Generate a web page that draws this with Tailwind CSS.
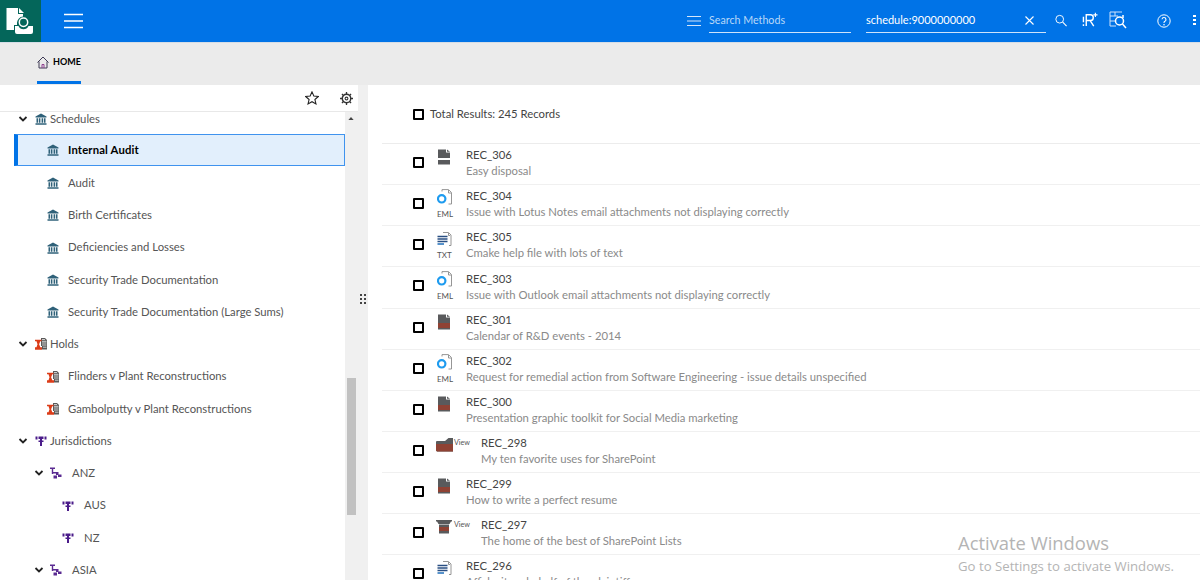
<!DOCTYPE html>
<html><head><meta charset="utf-8"><script src="https://cdn.jsdelivr.net/npm/@tailwindcss/browser@4"></script></head>
<body class="w-[1200px] h-[580px] overflow-hidden bg-white font-['Lato','Noto_Sans',sans-serif] text-[11.3px] relative">
<svg class="hidden"><defs>
<symbol id="bank" viewBox="0 0 12 12"><path d="M6 .5 11.500 3.500V4.500H.5V3.500Z M1.500 5.200H3.200V9.800H1.500Z M4 5.200H5.400V9.800H4Z M6.600 5.200H8V9.800H6.600Z M8.800 5.200H10.500V9.800H8.800Z M.5 10.300H11.500V11.800H.5Z" fill="#2f6179"/></symbol>
<symbol id="hold" viewBox="0 0 12 12"><path d="M6 0H10L12 2V11.500H7V8H6Z" fill="#5a5a5a"/><path d="M7 1.500H10M7 3.300H11.500M7 5H11.500M7 7H11.500M8 9.200H11.500" stroke="#fff" stroke-width=".7"/><path d="M0 1.800H6.500V3.300H5.300L4.100 6.300 5.300 9.300H7V11.800H0V9.300H1.500L2.500 6.300 1.500 3.300H0Z" fill="#dc3c18"/></symbol>
<symbol id="jur" viewBox="0 0 12 12"><path d="M3.500 1.500H8.500V4H7V5.500H8.500V7H7V11H5V7H3.500V5.500H5V4H3.500Z M.5 1.500H2.500V4.500H.5Z M9.500 1.500H11.500V4.500H9.500Z" fill="#4b1c8a"/></symbol>
<symbol id="reg" viewBox="0 0 12 12"><path d="M0 .5H5V2H3.200V7H1.800V2H0Z M3 5H7V6.500H3Z M6 5H8.500V8H6Z M8 7.500H11.500V10H8Z M3.500 8.500H7V11.500H3.500Z" fill="#5a2a91"/></symbol>
<symbol id="chev" viewBox="0 0 10 10"><path d="M1.500 3 5 6.500 8.500 3" fill="none" stroke="#222" stroke-width="1.800"/></symbol>
<symbol id="eml" viewBox="0 0 16 18"><path d="M5 2.500V.6H11.500L14.500 3.500V15H11.500M14 4H11.500V1" fill="none" stroke="#8a8a8a" stroke-width=".9"/><circle cx="4.700" cy="9.800" r="3.700" fill="none" stroke="#1e9bef" stroke-width="2.200"/></symbol>
<symbol id="txt" viewBox="0 0 16 14"><path d="M6 .5H11.500L14 3V13.500H12M13 3.500H11.500V1" fill="none" stroke="#8a8a8a" stroke-width=".9"/><path d="M.5 4.500H10.500M.5 7H10.500M.5 9.500H10.500" stroke="#2a4f83" stroke-width="1.400"/><path d="M.5 12H7" stroke="#0e63b5" stroke-width="1.400"/></symbol>
<symbol id="doc" viewBox="0 0 12 16"><path d="M0 .5H8V3.500H12V15.500H0Z" fill="#595a5c"/><path d="M9 .5 12 2.700H9Z" fill="#595a5c"/><path d="M0 9H12V14H0Z" fill="#8f4234"/></symbol>
<symbol id="dis" viewBox="0 0 12 16"><path d="M0 .5H8V3.500H12V9H0Z" fill="#595a5c"/><path d="M9 .5 12 2.700H9Z" fill="#595a5c"/><path d="M0 11H12V15.500H0Z" fill="#595a5c"/></symbol>
</defs></svg>

<header class="h-[42px] bg-[#0073e7] flex items-center text-white">
  <div class="w-[41px] h-[42px] bg-[#04665a] shrink-0">
    <svg viewBox="0 0 41 42" class="w-[41px] h-[42px]"><path d="M6.500 8H18V14H23V16.500A6.500 6.500 0 0 0 17 22.500V25H14V30H6.500Z" fill="#fff"/><path d="M19 8 24 13H19Z" fill="#fff"/><circle cx="23.500" cy="22.300" r="4.200" fill="none" stroke="#fff" stroke-width="1.500"/><path d="M15 26H18.500A5.500 5.500 0 0 0 28.500 26H33V32Q33 34 31 34H17Q15 34 15 32Z" fill="#fff"/></svg>
  </div>
  <svg class="ml-[23px] w-[20px] h-[16px]" viewBox="0 0 20 16"><path d="M0 1.500H19M0 8H19M0 14.500H19" stroke="#fff" stroke-width="1.400"/></svg>
  <div class="flex-1"></div>
  <svg class="w-[14px] h-[12px] mr-[8px]" viewBox="0 0 14 12"><path d="M0 1.500H14M0 6H14M0 10.500H14" stroke="#d5e6fa" stroke-width="1"/></svg>
  <div class="w-[142px] h-[24px] flex items-center border-b border-[#cfe3fa] text-[#b9d8f8] text-[10.700px] mr-[15px]">Search Methods</div>
  <div class="w-[180px] h-[24px] flex items-center justify-between border-b border-[#cfe3fa] text-[11px]">schedule:9000000000
    <svg class="w-[9px] h-[9px] mr-[12px]" viewBox="0 0 9 9"><path d="M.5.5 8.500 8.500M8.500.5.5 8.500" stroke="#fff" stroke-width="1.100"/></svg></div>
  <svg class="w-[12px] h-[13px] ml-[9px] mb-[2px]" viewBox="0 0 14 14"><circle cx="5.500" cy="5.500" r="4.500" fill="none" stroke="#fff" stroke-width="1.100"/><path d="M9 9 13.500 13.500" stroke="#fff" stroke-width="1.300"/></svg>
  <svg class="w-[16px] h-[15px] ml-[15px] mb-[3px]" viewBox="0 0 16 16"><path d="M1 5V11M1 13V15M4 15V3H8.500A3 3 0 0 1 8.500 9H4M8 9 12 15" fill="none" stroke="#fff" stroke-width="1.500"/><path d="M11.500 3H16M13.750 .8V5.200" stroke="#fff" stroke-width="1.200"/></svg>
  <svg class="w-[18px] h-[18px] ml-[11px] mb-[3px]" viewBox="0 0 18 18"><path d="M13 1H1V15H7M1 5H9M1 10H6M6 1V5" fill="none" stroke="#cfe3fa" stroke-width="1"/><circle cx="10.500" cy="10" r="4" fill="none" stroke="#fff" stroke-width="1.500"/><path d="M13.500 13 17 17M14 4V7" stroke="#fff" stroke-width="1.500"/></svg>
  <svg class="w-[14px] h-[14px] ml-[30px]" viewBox="0 0 14 14"><circle cx="7" cy="7" r="6.200" fill="none" stroke="#fff" stroke-width="1"/><path d="M5 5.300A2 2 0 1 1 7.500 7.500C7 7.800 7 8 7 9" fill="none" stroke="#fff" stroke-width="1.100"/><circle cx="7" cy="10.700" r=".8" fill="#fff"/></svg>
  <div class="ml-[22px] mr-[4px] mb-[2px] flex flex-col gap-[1.500px]"><div class="w-[3px] h-[2.500px] bg-white"></div><div class="w-[3px] h-[2.500px] bg-white"></div><div class="w-[3px] h-[2.500px] bg-white"></div></div>
</header>

<nav class="h-[43px] bg-[#ebebeb] border-t border-[#d5dde6] pl-[37px]">
  <div class="w-[44px] h-[41px] border-b-[3px] border-[#0073e7] flex items-center gap-[4px]">
    <svg class="w-[12px] h-[13px] shrink-0" viewBox="0 0 12 13"><path d="M.5 6.500 6 1 11.500 6.500M2 5.500V12H10V5.500" fill="none" stroke="#3e3a55" stroke-width="1"/><path d="M5 12V8.500H7V12" fill="none" stroke="#8e3f8f" stroke-width="1"/></svg>
    <span class="font-bold text-[9px] text-black">HOME</span>
  </div>
</nav>

<div class="flex h-[495px] bg-[#f0f0f0]">
  <aside class="w-[358px] shrink-0 flex flex-col">
    <div class="h-[27px] bg-white border-b border-[#e8e8e8] flex items-center justify-end pr-[5px] gap-[21px]">
      <svg class="w-[14px] h-[14px]" viewBox="0 0 13 13"><path d="M6.500 .8 8.200 4.700 12.400 5.100 9.200 7.900 10.200 12 6.500 9.900 2.800 12 3.800 7.900 .6 5.100 4.800 4.700Z" fill="none" stroke="#222" stroke-width="1"/></svg>
      <svg class="w-[13px] h-[13px]" viewBox="0 0 12 12"><circle cx="6" cy="6" r="3.900" fill="none" stroke="#333" stroke-width="1.300"/><circle cx="6" cy="6" r="1.300" fill="none" stroke="#333" stroke-width="1"/><path d="M6 0V2M6 10V12M0 6H2M10 6H12M1.800 1.800 3.200 3.200M8.800 8.800 10.200 10.200M10.200 1.800 8.800 3.200M3.200 8.800 1.800 10.200" stroke="#333" stroke-width="1.200"/></svg>
    </div>
    <div class="flex-1 flex overflow-hidden">
      <ul class="w-[345px] bg-white text-[#555] flex flex-col">
        <li class="h-[22px] shrink-0 flex items-start pl-[18px]"><svg class="w-[10px] h-[10px] mr-[7px] mt-[2px]"><use href="#chev"/></svg><svg class="w-[12px] h-[12px] mr-[3px] mt-[1px]"><use href="#bank"/></svg><span class="leading-[13px]">Schedules</span></li>
        <li class="h-[32px] shrink-0 mb-[1px] ml-[14px] bg-[#e2effc] border border-[#3f93ee] border-l-[4px] border-l-[#0073e7] flex items-center pl-[29px] gap-[9px] font-bold text-black tracking-[.15px]"><svg class="w-[12px] h-[12px]"><use href="#bank"/></svg>Internal Audit</li>
        <li class="h-[32px] shrink-0 flex items-center pl-[47px] gap-[9px]"><svg class="w-[12px] h-[12px]"><use href="#bank"/></svg>Audit</li>
        <li class="h-[32px] shrink-0 flex items-center pl-[47px] gap-[9px]"><svg class="w-[12px] h-[12px]"><use href="#bank"/></svg>Birth Certificates</li>
        <li class="h-[33px] shrink-0 flex items-center pl-[47px] gap-[9px]"><svg class="w-[12px] h-[12px]"><use href="#bank"/></svg>Deficiencies and Losses</li>
        <li class="h-[32px] shrink-0 flex items-center pl-[47px] gap-[9px]"><svg class="w-[12px] h-[12px]"><use href="#bank"/></svg>Security Trade Documentation</li>
        <li class="h-[32px] shrink-0 flex items-center pl-[47px] gap-[9px]"><svg class="w-[12px] h-[12px]"><use href="#bank"/></svg>Security Trade Documentation (Large Sums)</li>
        <li class="h-[32px] shrink-0 flex items-center pl-[18px]"><svg class="w-[10px] h-[10px] mr-[7px]"><use href="#chev"/></svg><svg class="w-[12px] h-[12px] mr-[3px]"><use href="#hold"/></svg>Holds</li>
        <li class="h-[33px] shrink-0 flex items-center pl-[47px] gap-[9px]"><svg class="w-[12px] h-[12px]"><use href="#hold"/></svg>Flinders v Plant Reconstructions</li>
        <li class="h-[32px] shrink-0 flex items-center pl-[47px] gap-[9px]"><svg class="w-[12px] h-[12px]"><use href="#hold"/></svg>Gambolputty v Plant Reconstructions</li>
        <li class="h-[32px] shrink-0 flex items-center pl-[18px]"><svg class="w-[10px] h-[10px] mr-[7px]"><use href="#chev"/></svg><svg class="w-[12px] h-[12px] mr-[3px]"><use href="#jur"/></svg>Jurisdictions</li>
        <li class="h-[32px] shrink-0 flex items-center pl-[34px]"><svg class="w-[10px] h-[10px] mr-[6px]"><use href="#chev"/></svg><svg class="w-[12px] h-[12px] mr-[10px]"><use href="#reg"/></svg>ANZ</li>
        <li class="h-[33px] shrink-0 flex items-center pl-[62px] gap-[10px]"><svg class="w-[12px] h-[12px]"><use href="#jur"/></svg>AUS</li>
        <li class="h-[32px] shrink-0 flex items-center pl-[62px] gap-[10px]"><svg class="w-[12px] h-[12px]"><use href="#jur"/></svg>NZ</li>
        <li class="h-[32px] shrink-0 flex items-center pl-[34px]"><svg class="w-[10px] h-[10px] mr-[6px]"><use href="#chev"/></svg><svg class="w-[12px] h-[12px] mr-[10px]"><use href="#reg"/></svg>ASIA</li>
      </ul>
      <div class="w-[13px] relative">
        <svg class="absolute left-[3px] top-[5px] w-[6px] h-[3px]" viewBox="0 0 7 4"><path d="M3.500 0 7 4H0Z" fill="#444"/></svg>
        <div class="absolute top-[266px] left-[2px] w-[9px] h-[137px] bg-[#c1c1c1]"></div>
      </div>
    </div>
  </aside>
  <div class="w-[10px] flex justify-center pt-[209px]">
    <div class="grid grid-cols-2 gap-[2px] h-fit"><i class="w-[2px] h-[2px] bg-[#444]"></i><i class="w-[2px] h-[2px] bg-[#444]"></i><i class="w-[2px] h-[2px] bg-[#444]"></i><i class="w-[2px] h-[2px] bg-[#444]"></i><i class="w-[2px] h-[2px] bg-[#444]"></i><i class="w-[2px] h-[2px] bg-[#444]"></i></div>
  </div>
  <main class="flex-1 bg-white pl-[14px] overflow-hidden">
    <div class="h-[59px] flex items-center pl-[31px] border-b border-[#ececec] text-[#444]">
      <span class="w-[11px] h-[11px] border-2 border-black rounded-[1px] mr-[6px]"></span>Total Results: 245 Records
    </div>
    <div class="flex flex-col">
      <div class="h-[41px] flex border-b border-[#f0f0f0] pl-[31px]"><span class="w-[11px] h-[11px] border-2 border-black rounded-[1px] mt-[13px] mr-[8px]"></span><div class="w-[34px] pl-[6px] pt-[5px]"><svg class="w-[12px] h-[16px]"><use href="#dis"/></svg></div><div class="pt-[3px]"><div class="text-[#444]">REC_306</div><div class="text-[#8a8a8a] mt-[-1px]">Easy disposal</div></div></div>
      <div class="h-[41px] flex border-b border-[#f0f0f0] pl-[31px]"><span class="w-[11px] h-[11px] border-2 border-black rounded-[1px] mt-[13px] mr-[8px]"></span><div class="w-[34px] pl-[5px] pt-[4px] relative"><svg class="w-[16px] h-[18px]"><use href="#eml"/></svg><span class="absolute left-[5px] top-[25px] text-[8px] leading-none text-[#555]">EML</span></div><div class="pt-[3px]"><div class="text-[#444]">REC_304</div><div class="text-[#8a8a8a] mt-[-1px]">Issue with Lotus Notes email attachments not displaying correctly</div></div></div>
      <div class="h-[41px] flex border-b border-[#f0f0f0] pl-[31px]"><span class="w-[11px] h-[11px] border-2 border-black rounded-[1px] mt-[13px] mr-[8px]"></span><div class="w-[34px] pl-[5px] pt-[6px] relative"><svg class="w-[16px] h-[14px]"><use href="#txt"/></svg><span class="absolute left-[5px] top-[25px] text-[8px] leading-none text-[#555]">TXT</span></div><div class="pt-[3px]"><div class="text-[#444]">REC_305</div><div class="text-[#8a8a8a] mt-[-1px]">Cmake help file with lots of text</div></div></div>
      <div class="h-[42px] flex border-b border-[#f0f0f0] pl-[31px]"><span class="w-[11px] h-[11px] border-2 border-black rounded-[1px] mt-[13px] mr-[8px]"></span><div class="w-[34px] pl-[5px] pt-[4px] relative"><svg class="w-[16px] h-[18px]"><use href="#eml"/></svg><span class="absolute left-[5px] top-[25px] text-[8px] leading-none text-[#555]">EML</span></div><div class="pt-[4px]"><div class="text-[#444]">REC_303</div><div class="text-[#8a8a8a] mt-[-1px]">Issue with Outlook email attachments not displaying correctly</div></div></div>
      <div class="h-[41px] flex border-b border-[#f0f0f0] pl-[31px]"><span class="w-[11px] h-[11px] border-2 border-black rounded-[1px] mt-[13px] mr-[8px]"></span><div class="w-[34px] pl-[6px] pt-[5px]"><svg class="w-[12px] h-[16px]"><use href="#doc"/></svg></div><div class="pt-[3px]"><div class="text-[#444]">REC_301</div><div class="text-[#8a8a8a] mt-[-1px]">Calendar of R&amp;D events - 2014</div></div></div>
      <div class="h-[41px] flex border-b border-[#f0f0f0] pl-[31px]"><span class="w-[11px] h-[11px] border-2 border-black rounded-[1px] mt-[13px] mr-[8px]"></span><div class="w-[34px] pl-[5px] pt-[4px] relative"><svg class="w-[16px] h-[18px]"><use href="#eml"/></svg><span class="absolute left-[5px] top-[25px] text-[8px] leading-none text-[#555]">EML</span></div><div class="pt-[3px]"><div class="text-[#444]">REC_302</div><div class="text-[#8a8a8a] mt-[-1px]">Request for remedial action from Software Engineering - issue details unspecified</div></div></div>
      <div class="h-[41px] flex border-b border-[#f0f0f0] pl-[31px]"><span class="w-[11px] h-[11px] border-2 border-black rounded-[1px] mt-[13px] mr-[8px]"></span><div class="w-[34px] pl-[6px] pt-[5px]"><svg class="w-[12px] h-[16px]"><use href="#doc"/></svg></div><div class="pt-[3px]"><div class="text-[#444]">REC_300</div><div class="text-[#8a8a8a] mt-[-1px]">Presentation graphic toolkit for Social Media marketing</div></div></div>
      <div class="h-[41px] flex border-b border-[#f0f0f0] pl-[31px]"><span class="w-[11px] h-[11px] border-2 border-black rounded-[1px] mt-[13px] mr-[8px]"></span><div class="w-[49px] pl-[4px] pt-[6px] flex gap-[1px]"><svg class="w-[17px] h-[14px] shrink-0" viewBox="0 0 17 14"><path d="M0 3.500 1 3H9L12.500 0H17V13.500H1L0 12.500Z" fill="#595a5c"/><path d="M0 6H17V13.500H1L0 12.500Z" fill="#8f4234"/></svg><span class="text-[7.200px] leading-[10px] text-[#555]">View</span></div><div class="pt-[3px]"><div class="text-[#444]">REC_298</div><div class="text-[#8a8a8a] mt-[-1px]">My ten favorite uses for SharePoint</div></div></div>
      <div class="h-[41px] flex border-b border-[#f0f0f0] pl-[31px]"><span class="w-[11px] h-[11px] border-2 border-black rounded-[1px] mt-[13px] mr-[8px]"></span><div class="w-[34px] pl-[6px] pt-[5px]"><svg class="w-[12px] h-[16px]"><use href="#doc"/></svg></div><div class="pt-[3px]"><div class="text-[#444]">REC_299</div><div class="text-[#8a8a8a] mt-[-1px]">How to write a perfect resume</div></div></div>
      <div class="h-[41px] flex border-b border-[#f0f0f0] pl-[31px]"><span class="w-[11px] h-[11px] border-2 border-black rounded-[1px] mt-[13px] mr-[8px]"></span><div class="w-[49px] pl-[4px] pt-[6px] flex gap-[1px]"><svg class="w-[17px] h-[14px] shrink-0" viewBox="0 0 17 14"><path d="M0 0H16V1.500H15L13.500 4H2.500L1 1.500H0Z" fill="#595a5c"/><path d="M3 4.500H13V7H3Z" fill="#595a5c"/><path d="M3 7H13V11H3Z" fill="#8f4234"/><path d="M3 11H13V13.500H3Z" fill="#595a5c"/></svg><span class="text-[7.200px] leading-[10px] text-[#555]">View</span></div><div class="pt-[3px]"><div class="text-[#444]">REC_297</div><div class="text-[#8a8a8a] mt-[-1px]">The home of the best of SharePoint Lists</div></div></div>
      <div class="h-[41px] flex pl-[31px]"><span class="w-[11px] h-[11px] border-2 border-black rounded-[1px] mt-[13px] mr-[8px]"></span><div class="w-[34px] pl-[5px] pt-[6px]"><svg class="w-[16px] h-[14px]"><use href="#txt"/></svg></div><div class="pt-[3px]"><div class="text-[#444]">REC_296</div><div class="text-[#8a8a8a] mt-[-1px]">Affidavit on behalf of the plaintiff</div></div></div>
    </div>
  </main>
</div>

<div class="absolute left-[958px] top-[531px] text-[#b4b4b4] font-['Open_Sans',sans-serif]">
  <div class="text-[18.400px] leading-[24px]">Activate Windows</div>
  <div class="text-[13.200px] leading-[22px]">Go to Settings to activate Windows.</div>
</div>
</body></html>
